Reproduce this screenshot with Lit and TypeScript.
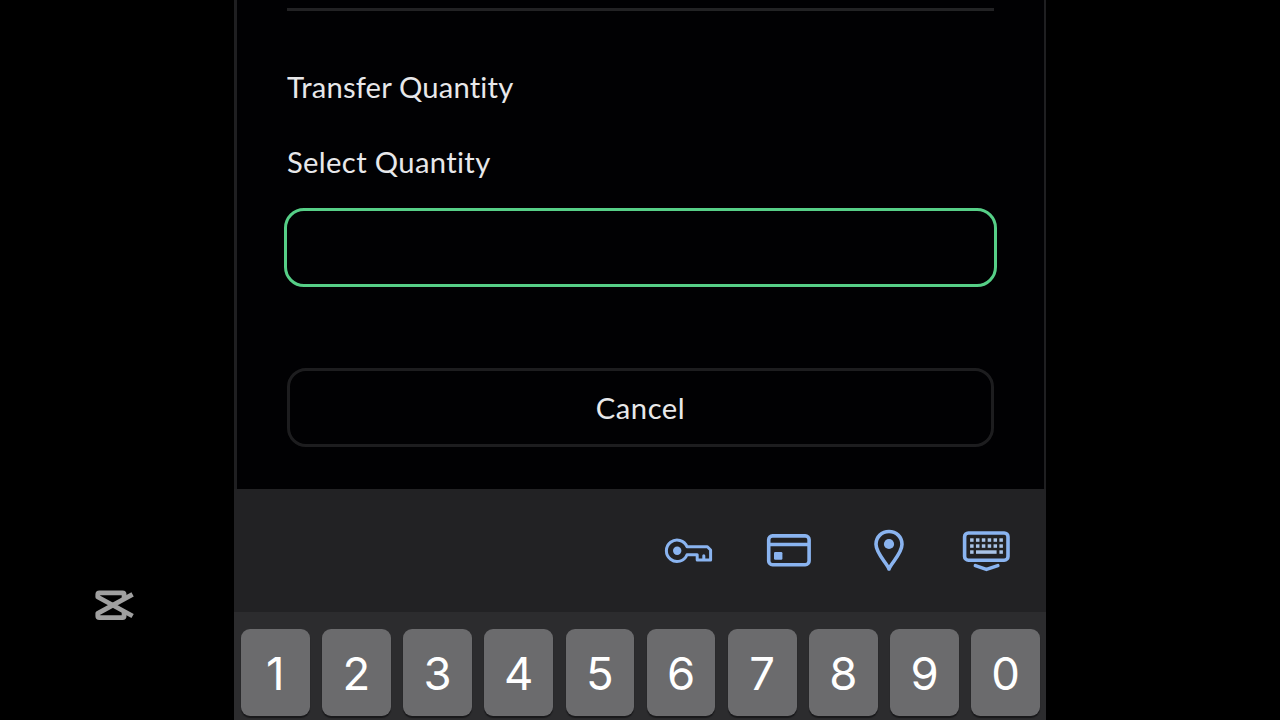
import { LitElement, html, svg, css } from 'lit';
import { customElement, property } from 'lit/decorators.js';

@customElement('key-cap')
export class KeyCap extends LitElement {
  static styles = css`
    :host {
      display: flex;
      flex: 1;
      height: 87px;
      align-items: center;
      justify-content: center;
      border-radius: 9px;
      background-color: #6b6b6d;
      box-shadow: 0 2px 1px #19191b;
      color: #ffffff;
      font-family: Inter, sans-serif;
      font-size: 45.5px;
      font-weight: 400;
      line-height: 87px;
    }

    .label {
      position: relative;
      top: 1px;
    }
  `;

  @property({ type: String })
  label = '';

  render() {
    return html`<span class="label">${this.label}</span>`;
  }
}

@customElement('keyboard-toolbar')
export class KeyboardToolbar extends LitElement {
  static styles = css`
    :host {
      display: flex;
      box-sizing: border-box;
      height: 123px;
      padding: 37px 33px 0 0;
      justify-content: flex-end;
      gap: 48px;
      background-color: #222224;
    }

    svg {
      display: block;
      height: 48px;
      fill: none;
      stroke: #8ab4f0;
      stroke-width: 3.6;
      stroke-linejoin: round;
      stroke-linecap: round;
    }

    .keyboard {
      margin-left: -2px;
    }

    .solid {
      fill: #8ab4f0;
      stroke: none;
    }

    .dots {
      fill: #a9c3e6;
      stroke: none;
    }
  `;

  private _keyRow(y: number, columns: number[]) {
    return columns.map(
      (c) => svg`<rect x=${9.1 + c * 5.86} y=${y} width="3.5" height="3.5" />`
    );
  }

  render() {
    return html`
      <svg width="52" height="48" viewBox="0 0 52 48">
        <g stroke-width="3">
          <path
            d="M24 20.8 H44.4 L47.6 24 V34 H34.2 V28.8 H24 A10.7 10.7 0 1 1 24 20.8 Z"
          />
          <path d="M40.8 33 V29.8" />
        </g>
        <circle class="solid" cx="14.2" cy="24.8" r="4.2" />
      </svg>
      <svg width="52" height="48" viewBox="0 0 52 48">
        <rect x="5.7" y="9.9" width="40.4" height="28.8" rx="3.8" />
        <path stroke-linecap="butt" d="M5.6 18.5 H46.2" />
        <rect class="solid" x="11" y="26" width="8.4" height="7.7" rx="1.2" />
      </svg>
      <svg width="52" height="48" viewBox="0 0 52 48">
        <path
          d="M26 43 C23.5 36.5 13 27.5 13 18.3 C13 10.9 18.7 5.5 26 5.5 C33.3 5.5 39 10.9 39 18.3 C39 27.5 28.5 36.5 26 43 Z"
        />
        <circle class="solid" cx="26" cy="18" r="5.1" />
      </svg>
      <svg class="keyboard" width="52" height="48" viewBox="0 0 52 48">
        <rect x="3.6" y="7" width="43.4" height="27.2" rx="3.8" />
        <g class="dots">
          ${this._keyRow(12.3, [0, 1, 2, 3, 4, 5])}
          ${this._keyRow(18.3, [0, 1, 2, 3, 4, 5])}
          ${this._keyRow(24.3, [0, 5])}
          <rect x="15" y="24.3" width="20.6" height="3.5" />
        </g>
        <path d="M14.4 39.6 L25.4 43.4 L36.8 39.6" />
      </svg>
    `;
  }
}

@customElement('transfer-form')
export class TransferForm extends LitElement {
  static styles = css`
    :host {
      display: flex;
      flex-direction: column;
      box-sizing: border-box;
      height: 489px;
      padding: 8px 50px 0;
      border: solid #1f1f21;
      border-width: 0 2px 0 3px;
      background-color: #010103;
      color: #e8e8ea;
      font-family: Lato, sans-serif;
      font-size: 29.2px;
      line-height: 36px;
    }

    .divider {
      height: 2.5px;
      background-color: #222224;
    }

    .title {
      margin-top: 58px;
      letter-spacing: 0.17px;
    }

    .caption {
      margin-top: 39px;
      letter-spacing: 0.35px;
    }

    .quantity {
      box-sizing: border-box;
      height: 79px;
      margin: 28.5px -3px 0;
      padding: 0 20px;
      border: 3px solid #56cf87;
      border-radius: 20px;
      outline: none;
      background: transparent;
      color: inherit;
      font: inherit;
    }

    .cancel {
      box-sizing: border-box;
      height: 79px;
      margin-top: 81px;
      padding: 0;
      border: 3px solid #1d1d1f;
      border-radius: 19px;
      background: transparent;
      color: inherit;
      font: inherit;
      letter-spacing: 0.55px;
    }
  `;

  render() {
    return html`
      <div class="divider"></div>
      <div class="title">Transfer Quantity</div>
      <label class="caption" for="quantity">Select Quantity</label>
      <input class="quantity" id="quantity" type="text" inputmode="numeric" />
      <button class="cancel">Cancel</button>
    `;
  }
}

@customElement('app-root')
export class AppRoot extends LitElement {
  static styles = css`
    :host {
      display: grid;
      grid-template-columns: 234px 812px 1fr;
      height: 720px;
      overflow: hidden;
      background-color: #000000;
    }

    .side {
      display: flex;
      align-items: flex-end;
      padding: 0 0 98px 94px;
    }

    .logo {
      display: block;
      fill: none;
      stroke: #a0a0a0;
      stroke-width: 4.8;
      stroke-linejoin: round;
    }

    .phone {
      display: flex;
      flex-direction: column;
    }

    .keys {
      display: flex;
      flex: 1;
      align-items: flex-start;
      gap: 12.6px;
      padding: 17px 6px 0 7px;
      background-color: #2c2c2e;
    }
  `;

  private _digits = ['1', '2', '3', '4', '5', '6', '7', '8', '9', '0'];

  render() {
    return html`
      <div class="side">
        <svg class="logo" width="42" height="34" viewBox="0 0 42 34">
          <path d="M38.6 6.4 L3.8 25.4 V28 Q3.8 29.6 5.4 29.6 H28.5 Q30.1 29.6 30.1 28 V24" />
          <path d="M38.6 28 L3.8 9 V6.4 Q3.8 4.8 5.4 4.8 H28.5 Q30.1 4.8 30.1 6.4 V10.4" />
        </svg>
      </div>
      <div class="phone">
        <transfer-form></transfer-form>
        <keyboard-toolbar></keyboard-toolbar>
        <div class="keys">
          ${this._digits.map((d) => html`<key-cap label=${d}></key-cap>`)}
        </div>
      </div>
    `;
  }
}
